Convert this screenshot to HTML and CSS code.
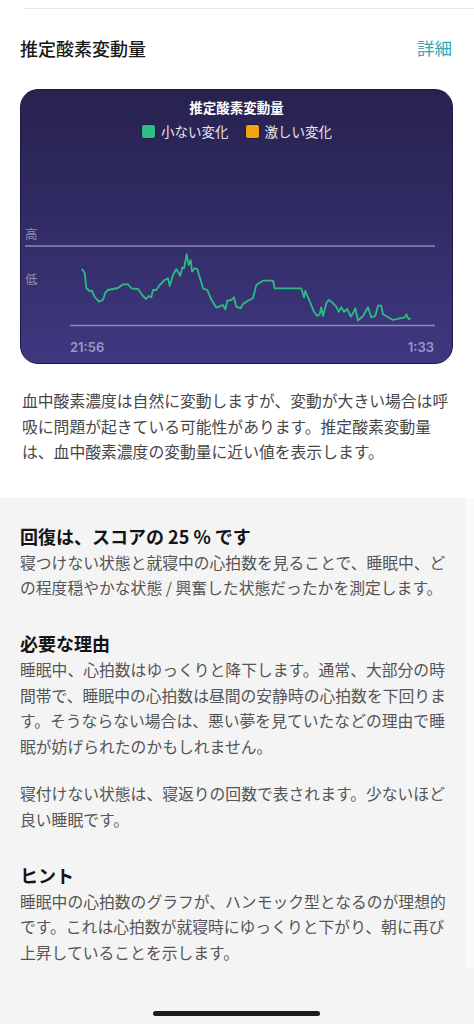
FILE: index.html
```html
<!DOCTYPE html>
<html lang="ja">
<head>
<meta charset="utf-8">
<title>推定酸素変動量</title>
<link rel="stylesheet" href="styles.css">
</head>
<body>
<div class="page">
  <div class="top-rule"></div>
  <header class="section-head">
    <h2 class="section-title">推定酸素変動量</h2>
    <a class="detail-link">詳細</a>
  </header>

  <div class="chart-card">
    <div class="chart-title">推定酸素変動量</div>
    <div class="legend">
      <span class="legend-item"><span class="swatch swatch-green"></span>小ない変化</span>
      <span class="legend-item"><span class="swatch swatch-orange"></span>激しい変化</span>
    </div>
    <svg class="plot" viewBox="20 222 433 111" width="433" height="111">
      <text class="axis-label" x="25" y="239">高</text>
      <text class="axis-label" x="25" y="284">低</text>
      <line class="grid" x1="25" y1="246" x2="435" y2="246"/>
      <line class="grid" x1="70" y1="325.5" x2="435" y2="325.5"/>
      <polyline class="trace" points="82,269 84.7,273.3 86.3,288 89.7,291 92,290.7 94.7,297 99,301.7 103,300 105.3,292.7 108,290 113,289 118,288 123,284.3 128,284.3 131.3,288.3 138,289 143,296 146.3,299 148.7,296 151.3,297.3 153,290 156.3,290 159.7,285 164.7,280 168,278.3 169.7,286 173,275 176.3,269 180.3,275.7 182.3,267.3 184,268.3 186.7,254.3 188.7,265 190.7,260 192,271.7 194.7,268.3 197.3,269 203,288.3 207.3,290 211.3,299.3 216.3,307.7 223,305 225.3,309.3 227.3,300.7 231.3,300 234,297.3 236.3,306.7 240.7,308.3 243,304 248,300.7 253,298.3 256.3,285 263,280.7 273,280.7 274.7,288.3 301.3,288.3 304,297.3 305.3,291 308,297.3 314,311.7 317.3,316 319.7,314.3 321.3,307.3 323,316 326.3,303.3 328.7,300 331.3,301.7 336.3,306.7 338.7,311.7 341.3,307.3 344,311.7 347.3,309 350.7,316.7 353,313.3 355.3,308.3 358,320.7 363,316 368,307.3 371.3,317.3 375.3,316 378,305.7 381.3,305.7 383,314.3 393,320 399.7,318.3 404.7,317.3 406.3,314.3 408.7,319.3 410.7,318.3"/>
    </svg>
    <div class="time-row">
      <span>21:56</span>
      <span>1:33</span>
    </div>
  </div>

  <p class="desc">血中酸素濃度は自然に変動しますが、変動が大きい場合は呼吸に問題が起きている可能性があります。推定酸素変動量は、血中酸素濃度の変動量に近い値を表示します。</p>

  <section class="info">
    <div class="info-block">
      <h3 class="info-title">回復は、スコアの 25 % です</h3>
      <p class="info-text">寝つけない状態と就寝中の心拍数を見ることで、睡眠中、どの程度穏やかな状態 / 興奮した状態だったかを測定します。</p>
    </div>
    <div class="info-block">
      <h3 class="info-title">必要な理由</h3>
      <p class="info-text">睡眠中、心拍数はゆっくりと降下します。通常、大部分の時間帯で、睡眠中の心拍数は昼間の安静時の心拍数を下回ります。そうならない場合は、悪い夢を見ていたなどの理由で睡眠が妨げられたのかもしれません。</p>
      <p class="info-text gap">寝付けない状態は、寝返りの回数で表されます。少ないほど良い睡眠です。</p>
    </div>
    <div class="info-block">
      <h3 class="info-title">ヒント</h3>
      <p class="info-text">睡眠中の心拍数のグラフが、ハンモック型となるのが理想的です。これは心拍数が就寝時にゆっくりと下がり、朝に再び上昇していることを示します。</p>
    </div>
    <div class="scroll-strip"></div>
  </section>

  <div class="home-indicator"></div>
</div>
</body>
</html>
```

FILE: styles.css
```css
* { box-sizing: border-box; }
html, body {
  margin: 0;
  padding: 0;
  background: #ffffff;
}
body {
  font-family: "Noto Sans CJK JP", "Noto Sans", sans-serif;
  width: 474px;
  height: 1024px;
  overflow: hidden;
}
.page {
  position: relative;
  display: flex;
  flex-direction: column;
  height: 1024px;
}
.top-rule {
  margin: 8px 0 0 24px;
  height: 1px;
  background: #e6e6e6;
}
.section-head {
  display: flex;
  justify-content: space-between;
  align-items: center;
  padding: 0 22px 0 20px;
  margin-top: 27px;
  height: 24px;
}
.section-title {
  margin: 0;
  font-size: 18px;
  font-weight: 500;
  color: #1a1a1a;
  line-height: 24px;
}
.detail-link {
  font-size: 17.5px;
  color: #2fa8b6;
  line-height: 24px;
}
.chart-card {
  margin: 29px 21px 0 20px;
  height: 275px;
  border-radius: 18px;
  border: 1px solid #1d1946;
  background: linear-gradient(180deg, #27224e 0%, #332d69 55%, #3f3881 100%);
  padding-top: 8px;
  display: flex;
  flex-direction: column;
  overflow: hidden;
}
.chart-title {
  text-align: center;
  font-size: 13.5px;
  font-weight: 700;
  color: #ffffff;
  line-height: 18px;
}
.legend {
  display: flex;
  justify-content: center;
  gap: 16px;
  margin-top: 7px;
  height: 16px;
  align-items: center;
}
.legend-item {
  display: flex;
  align-items: center;
  gap: 5px;
  font-size: 13.5px;
  line-height: 16px;
  color: #e6e5f0;
}
.swatch {
  width: 15px;
  height: 15px;
  border-radius: 3px;
  border: 1px solid #1e1a47;
}
.swatch-green { background: #2fbf86; }
.swatch-orange { background: #f2a60c; }
.plot {
  display: block;
  margin-top: 83px;
  margin-left: -1px;
}
.axis-label {
  font-family: "Noto Sans CJK JP", sans-serif;
  font-size: 12.5px;
  fill: #8f8bb4;
}
.grid {
  stroke: #8e8ab8;
  stroke-width: 1.5;
}
.trace {
  fill: none;
  stroke: #2dbb84;
  stroke-width: 1.8;
  stroke-linejoin: round;
}
.time-row {
  display: flex;
  justify-content: space-between;
  margin-top: 6px;
  padding: 0 18px 0 49px;
  font-family: "Inter", "Roboto", sans-serif;
  font-size: 13px;
  font-weight: 600;
  line-height: 16px;
  color: #9b97c4;
}
.desc {
  margin: 24px 0 0 0;
  padding: 0 20px 0 22px;
  font-size: 15.8px;
  line-height: 25.6px;
  color: #474747;
}
.info {
  position: relative;
  flex: 1;
  margin-top: 33px;
  background: #f4f4f4;
  padding: 26px 20px 0 20px;
}
.info-block + .info-block {
  margin-top: 30px;
}
.info-title {
  margin: 0;
  font-size: 18px;
  font-weight: 700;
  line-height: 24px;
  color: #141414;
}
.info-text {
  margin: 2px 0 0 0;
  font-size: 15.8px;
  line-height: 25.6px;
  color: #555555;
}
.info-text.gap {
  margin-top: 22px;
}
.scroll-strip {
  position: absolute;
  top: 0;
  right: 0;
  width: 8px;
  height: 470px;
  background: #fafafa;
}
.home-indicator {
  position: absolute;
  left: 153px;
  bottom: 8px;
  width: 167px;
  height: 5px;
  border-radius: 3px;
  background: #1c1c1c;
}
```
